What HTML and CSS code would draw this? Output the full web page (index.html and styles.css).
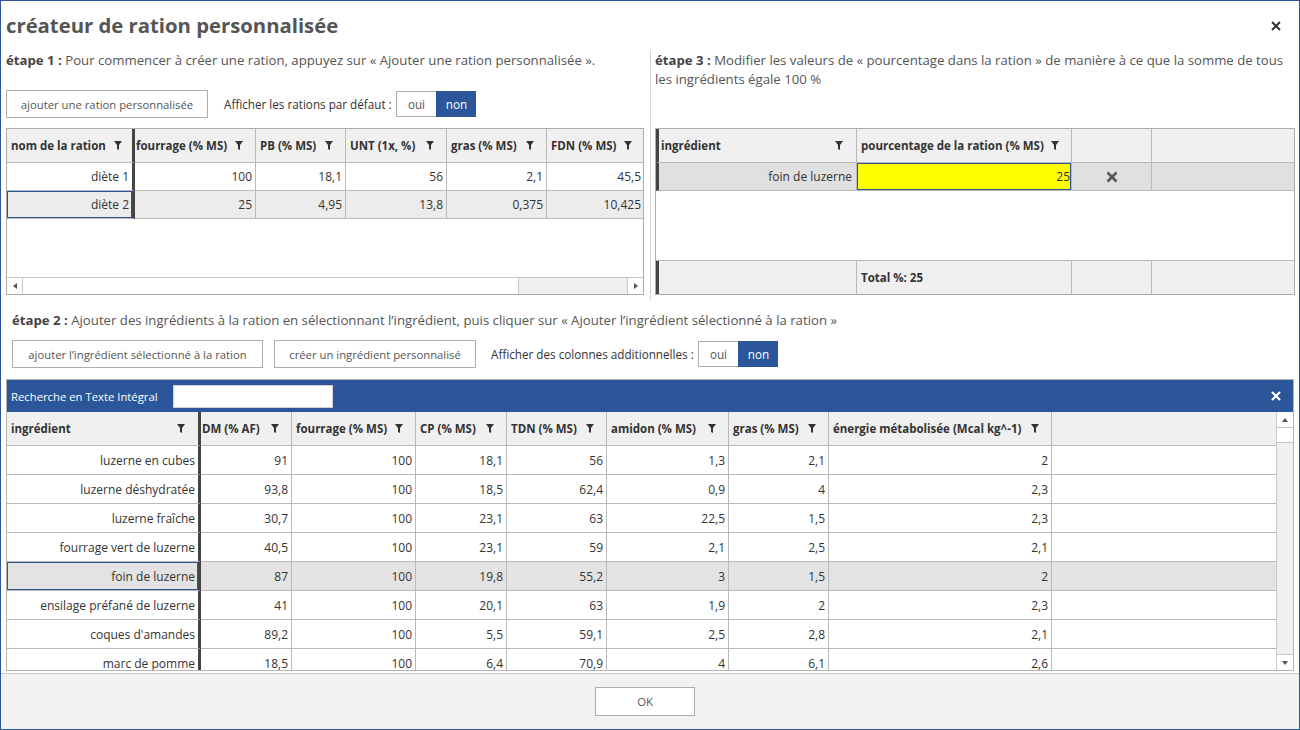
FILE: index.html
```html
<!DOCTYPE html>
<html lang="fr">
<head>
<meta charset="utf-8">
<title>créateur de ration personnalisée</title>
<link rel="stylesheet" href="styles.css">
</head>
<body>
<div class="dialog">
  <div class="titlebar">
    <h1 class="title">créateur de ration personnalisée</h1>
    <svg class="close" viewBox="0 0 10 10" width="10" height="10"><path d="M1 1L9 9M9 1L1 9"/></svg>
  </div>

  <div class="top">
    <section class="panel panel-left">
      <p class="step"><b>étape 1 :</b> Pour commencer à créer une ration, appuyez sur « Ajouter une ration personnalisée ».</p>
      <div class="toolbar toolbar-1">
        <button class="btn btn-ration">ajouter une ration personnalisée</button>
        <span class="tlabel">Afficher les rations par défaut :</span>
        <div class="toggle"><span class="opt">oui</span><span class="opt on">non</span></div>
      </div>
      <div class="grid grid1">
        <div class="gbody">
          <div class="row head">
            <div class="c frozen">nom de la ration<svg class="fi" viewBox="0 0 8 9"><path d="M0 0H8L5 4V9L3 8V4Z"/></svg></div>
            <div class="c af">fourrage (% MS)<svg class="fi" viewBox="0 0 8 9"><path d="M0 0H8L5 4V9L3 8V4Z"/></svg></div>
            <div class="c">PB (% MS)<svg class="fi" viewBox="0 0 8 9"><path d="M0 0H8L5 4V9L3 8V4Z"/></svg></div>
            <div class="c">UNT (1x, %)<svg class="fi" viewBox="0 0 8 9"><path d="M0 0H8L5 4V9L3 8V4Z"/></svg></div>
            <div class="c">gras (% MS)<svg class="fi" viewBox="0 0 8 9"><path d="M0 0H8L5 4V9L3 8V4Z"/></svg></div>
            <div class="c">FDN (% MS)<svg class="fi" viewBox="0 0 8 9"><path d="M0 0H8L5 4V9L3 8V4Z"/></svg></div>
          </div>
          <div class="row">
            <div class="c frozen">diète 1</div><div class="c">100</div><div class="c">18,1</div><div class="c">56</div><div class="c">2,1</div><div class="c">45,5</div>
          </div>
          <div class="row sel">
            <div class="c frozen cur">diète 2</div><div class="c">25</div><div class="c">4,95</div><div class="c">13,8</div><div class="c">0,375</div><div class="c">10,425</div>
          </div>
        </div>
        <div class="hscroll">
          <span class="sbtn"><svg viewBox="0 0 4 6" width="4" height="6"><path d="M4 0V6L0 3Z"/></svg></span>
          <span class="hthumb"></span>
          <span class="htrack"></span>
          <span class="sbtn"><svg viewBox="0 0 4 6" width="4" height="6"><path d="M0 0V6L4 3Z"/></svg></span>
        </div>
      </div>
    </section>
    <div class="vdivider"></div>
    <section class="panel panel-right">
      <p class="step"><b>étape 3 :</b> Modifier les valeurs de « pourcentage dans la ration » de manière à ce que la somme de tous<br>les ingrédients égale 100 %</p>
      <div class="grid grid3">
        <div class="row head">
          <div class="c first">ingrédient<svg class="fi" viewBox="0 0 8 9"><path d="M0 0H8L5 4V9L3 8V4Z"/></svg></div>
          <div class="c">pourcentage de la ration (% MS)<svg class="fi" viewBox="0 0 8 9"><path d="M0 0H8L5 4V9L3 8V4Z"/></svg></div>
          <div class="c"></div>
          <div class="c last"></div>
        </div>
        <div class="row sel3">
          <div class="c first">foin de luzerne</div>
          <div class="c edit">25</div>
          <div class="c del"><svg viewBox="0 0 12 12" width="12" height="12"><path d="M1.5 1.5L10.5 10.5M10.5 1.5L1.5 10.5"/></svg></div>
          <div class="c last"></div>
        </div>
        <div class="g3empty"></div>
        <div class="row foot">
          <div class="c first"></div>
          <div class="c total">Total %: 25</div>
          <div class="c"></div>
          <div class="c last"></div>
        </div>
      </div>
    </section>
  </div>

  <section class="step2">
    <p class="step"><b>étape 2 :</b> Ajouter des ingrédients à la ration en sélectionnant l’ingrédient, puis cliquer sur « Ajouter l’ingrédient sélectionné à la ration »</p>
    <div class="toolbar toolbar-2">
      <button class="btn btn-add-ing">ajouter l’ingrédient sélectionné à la ration</button>
      <button class="btn btn-create-ing">créer un ingrédient personnalisé</button>
      <span class="tlabel">Afficher des colonnes additionnelles :</span>
      <div class="toggle"><span class="opt">oui</span><span class="opt on">non</span></div>
    </div>
  </section>

  <div class="grid grid2">
    <div class="searchbar">
      <span class="slabel">Recherche en Texte Intégral</span>
      <span class="sinput"></span>
      <svg class="sclose" viewBox="0 0 10 10" width="10" height="10"><path d="M1 1L9 9M9 1L1 9"/></svg>
    </div>
    <div class="g2main">
      <div class="gbody">
        <div class="row head">
          <div class="c frozen">ingrédient<svg class="fi" viewBox="0 0 8 9"><path d="M0 0H8L5 4V9L3 8V4Z"/></svg></div>
          <div class="c af">DM (% AF)<svg class="fi" viewBox="0 0 8 9"><path d="M0 0H8L5 4V9L3 8V4Z"/></svg></div>
          <div class="c">fourrage (% MS)<svg class="fi" viewBox="0 0 8 9"><path d="M0 0H8L5 4V9L3 8V4Z"/></svg></div>
          <div class="c">CP (% MS)<svg class="fi" viewBox="0 0 8 9"><path d="M0 0H8L5 4V9L3 8V4Z"/></svg></div>
          <div class="c">TDN (% MS)<svg class="fi" viewBox="0 0 8 9"><path d="M0 0H8L5 4V9L3 8V4Z"/></svg></div>
          <div class="c">amidon (% MS)<svg class="fi" viewBox="0 0 8 9"><path d="M0 0H8L5 4V9L3 8V4Z"/></svg></div>
          <div class="c">gras (% MS)<svg class="fi" viewBox="0 0 8 9"><path d="M0 0H8L5 4V9L3 8V4Z"/></svg></div>
          <div class="c">énergie métabolisée (Mcal kg^-1)<svg class="fi" viewBox="0 0 8 9"><path d="M0 0H8L5 4V9L3 8V4Z"/></svg></div>
          <div class="c fill"></div>
        </div>
        <div class="row"><div class="c frozen">luzerne en cubes</div><div class="c">91</div><div class="c">100</div><div class="c">18,1</div><div class="c">56</div><div class="c">1,3</div><div class="c">2,1</div><div class="c">2</div><div class="c fill"></div></div>
        <div class="row"><div class="c frozen">luzerne déshydratée</div><div class="c">93,8</div><div class="c">100</div><div class="c">18,5</div><div class="c">62,4</div><div class="c">0,9</div><div class="c">4</div><div class="c">2,3</div><div class="c fill"></div></div>
        <div class="row"><div class="c frozen">luzerne fraîche</div><div class="c">30,7</div><div class="c">100</div><div class="c">23,1</div><div class="c">63</div><div class="c">22,5</div><div class="c">1,5</div><div class="c">2,3</div><div class="c fill"></div></div>
        <div class="row"><div class="c frozen">fourrage vert de luzerne</div><div class="c">40,5</div><div class="c">100</div><div class="c">23,1</div><div class="c">59</div><div class="c">2,1</div><div class="c">2,5</div><div class="c">2,1</div><div class="c fill"></div></div>
        <div class="row sel2"><div class="c frozen cur">foin de luzerne</div><div class="c">87</div><div class="c">100</div><div class="c">19,8</div><div class="c">55,2</div><div class="c">3</div><div class="c">1,5</div><div class="c">2</div><div class="c fill"></div></div>
        <div class="row"><div class="c frozen">ensilage préfané de luzerne</div><div class="c">41</div><div class="c">100</div><div class="c">20,1</div><div class="c">63</div><div class="c">1,9</div><div class="c">2</div><div class="c">2,3</div><div class="c fill"></div></div>
        <div class="row"><div class="c frozen">coques d'amandes</div><div class="c">89,2</div><div class="c">100</div><div class="c">5,5</div><div class="c">59,1</div><div class="c">2,5</div><div class="c">2,8</div><div class="c">2,1</div><div class="c fill"></div></div>
        <div class="row"><div class="c frozen">marc de pomme</div><div class="c">18,5</div><div class="c">100</div><div class="c">6,4</div><div class="c">70,9</div><div class="c">4</div><div class="c">6,1</div><div class="c">2,6</div><div class="c fill"></div></div>
      </div>
      <div class="vscroll">
        <span class="sbtn"><svg viewBox="0 0 6 4" width="6" height="4"><path d="M0 4H6L3 0Z"/></svg></span>
        <span class="vthumb"></span>
        <span class="vtrack"></span>
        <span class="sbtn"><svg viewBox="0 0 6 4" width="6" height="4"><path d="M0 0H6L3 4Z"/></svg></span>
      </div>
    </div>
  </div>

  <footer class="footer">
    <button class="btn btn-ok">OK</button>
  </footer>
</div>
</body>
</html>
```

FILE: styles.css
```css
* { box-sizing: border-box; }
html, body { margin: 0; padding: 0; }
body {
  width: 1300px;
  height: 730px;
  overflow: hidden;
  background: #fff;
  font-family: "Open Sans", "Liberation Sans", sans-serif;
  color: #444;
}
.dialog {
  width: 1300px;
  height: 730px;
  border: 1px solid #2b579a;
  display: flex;
  flex-direction: column;
  background: #fff;
}
.titlebar {
  height: 49px;
  flex: none;
  display: flex;
  align-items: center;
  justify-content: space-between;
  padding: 0 18px 0 5px;
}
.title {
  margin: 0;
  font-size: 20.3px;
  font-weight: 700;
  color: #555;
  line-height: 1;
}
.close { stroke: #333; stroke-width: 2; fill: none; }

.top {
  height: 250px;
  flex: none;
  display: flex;
}
.panel { padding-top: 1px; }
.panel-left { width: 649px; padding-left: 5px; padding-right: 6px; }
.vdivider { width: 1px; background: #d4d4d4; height: 250px; }
.panel-right { flex: 1; padding-left: 4px; padding-right: 4px; }

.step {
  margin: 0;
  font-size: 13.2px;
  line-height: 19px;
  color: #555;
  white-space: nowrap;
}
.step b { color: #444; font-weight: 700; }

.toolbar { display: flex; align-items: center; height: 28px; }
.toolbar-1 { margin-top: 20px; }
.btn {
  height: 28px;
  background: #fff;
  border: 1px solid #adadad;
  font-family: inherit;
  font-size: 11.3px;
  color: #555;
  padding: 0;
  flex: none;
}
.btn-ration { width: 202px; }
.tlabel { font-size: 11.7px; color: #333; white-space: nowrap; flex: none; }
.toolbar-1 .tlabel { margin-left: 16px; width: 172px; }
.toggle { display: flex; height: 26px; flex: none; }
.opt {
  width: 40px;
  display: flex;
  align-items: center;
  justify-content: center;
  font-size: 11.7px;
  color: #555;
  border: 1px solid #adadad;
  border-right: none;
}
.opt.on { background: #2b579a; border-color: #2b579a; color: #fff; }

/* grids */
.grid { border: 1px solid #acacac; background: #fff; }
.row { display: grid; }
.c {
  border-right: 1px solid #b9b9b9;
  border-bottom: 1px solid #b9b9b9;
  display: flex;
  align-items: center;
  justify-content: flex-end;
  padding: 0 3px 0 4px;
  font-size: 12px;
  color: #333;
  white-space: nowrap;
  overflow: hidden;
  min-width: 0;
}
.head .c {
  background: #f0f0f0;
  font-weight: 700;
  font-size: 11.5px;
  justify-content: space-between;
  padding: 0 12px 0 4px;
  color: #333;
}
.head .c.af { padding-left: 1px; }
.c.frozen { border-right: 3px solid #444; }
.fi { width: 8px; height: 9px; fill: #333; flex: none; margin-left: 6px; }
.sel .c { background: #ececec; }
.sel2 .c { background: #e3e3e3; }
.c.cur { box-shadow: inset 0 0 0 1px #2b579a; }

.grid1 {
  margin-top: 10px;
  height: 167px;
  display: flex;
  flex-direction: column;
}
.grid1 .gbody { flex: 1; overflow: hidden; }
.grid1 .row { grid-template-columns: 128px 121px 90px 101px 100px 98px; grid-auto-rows: 28px; }
.grid1 .row.head { grid-auto-rows: 34px; }
.grid1 .head .c.frozen { padding-right: 10px; }

.hscroll {
  height: 17px;
  flex: none;
  display: flex;
  border-top: 1px solid #c8c8c8;
}
.sbtn {
  width: 16px;
  flex: none;
  display: flex;
  align-items: center;
  justify-content: center;
  background: #fff;
}
.sbtn svg { fill: #555; }
.hscroll .sbtn:first-child { border-right: 1px solid #c8c8c8; }
.hscroll .sbtn:last-child { border-left: 1px solid #c8c8c8; }
.hthumb { width: 496px; background: #fff; border-right: 1px solid #c8c8c8; }
.htrack { flex: 1; background: #f0f0f0; }

.grid3 {
  margin-top: 39px;
  height: 167px;
  display: flex;
  flex-direction: column;
}
.grid3 .row { grid-template-columns: 201px 215px 80px 1fr; }
.grid3 .row.head { height: 34px; }
.grid3 .c.first { border-left: 3px solid #444; }
.grid3 .head .c.first { padding-left: 2px; padding-right: 13px; }
.grid3 .c.last { border-right: none; }
.sel3 { height: 28px; }
.sel3 .c { background: #e0e0e0; }
.sel3 .c.first { padding-right: 4px; }
.sel3 .c.edit { background: #ffff00; box-shadow: inset 0 0 0 1px #2b579a; padding-right: 1px; }
.c.del { justify-content: center; }
.c.del svg { stroke: #555; stroke-width: 2.6; fill: none; }
.g3empty { flex: 1; border-bottom: 1px solid #b9b9b9; }
.foot { height: 33px; }
.foot .c { background: #f0f0f0; border-bottom: none; }
.foot .c.total { justify-content: flex-start; font-weight: 700; font-size: 11.5px; padding-left: 4px; }

/* step 2 */
.step2 {
  height: 79px;
  flex: none;
  padding: 11px 0 0 11px;
}
.toolbar-2 { margin-top: 10px; }
.btn-add-ing { width: 251px; }
.btn-create-ing { width: 202px; margin-left: 11px; }
.toolbar-2 .tlabel { margin-left: 15px; width: 207px; }

.grid2 {
  margin: 0 5px;
  height: 292px;
  flex: none;
  display: flex;
  flex-direction: column;
  border-color: #b4b4b4;
}
.searchbar {
  height: 32px;
  flex: none;
  background: #2b579a;
  display: flex;
  align-items: center;
  padding: 0 12px 0 4px;
}
.slabel { color: #fff; font-size: 11.3px; white-space: nowrap; width: 162px; }
.sinput { width: 160px; height: 23px; background: #fff; border: 1px solid #d0d0d0; }
.sclose { margin-left: auto; stroke: #fff; stroke-width: 2.2; fill: none; }
.g2main { flex: 1; display: flex; overflow: hidden; }
.grid2 .gbody { flex: 1; overflow: hidden; }
.grid2 .row { grid-template-columns: 194px 91px 124px 91px 100px 122px 100px 223px 1fr; grid-auto-rows: 29px; }
.grid2 .row.head { grid-auto-rows: 34px; }
.grid2 .c.fill { border-right: none; }
.grid2 .head .c.frozen { padding-right: 13px; }
.vscroll {
  width: 17px;
  flex: none;
  display: flex;
  flex-direction: column;
  border-left: 1px solid #c8c8c8;
  background: #f0f0f0;
}
.vscroll .sbtn { width: auto; height: 16px; border-bottom: 1px solid #c8c8c8; }
.vscroll .sbtn:last-child { border-bottom: none; border-top: 1px solid #c8c8c8; }
.vthumb { height: 15px; background: #fff; border-bottom: 1px solid #c8c8c8; flex: none; }
.vtrack { flex: 1; }

.footer {
  flex: 1;
  margin-top: 2px;
  background: #f2f2f2;
  border-top: 1px solid #c8c8c8;
  display: flex;
  align-items: center;
  justify-content: center;
}
.btn-ok { width: 100px; height: 29px; margin-left: -10px; }
```
